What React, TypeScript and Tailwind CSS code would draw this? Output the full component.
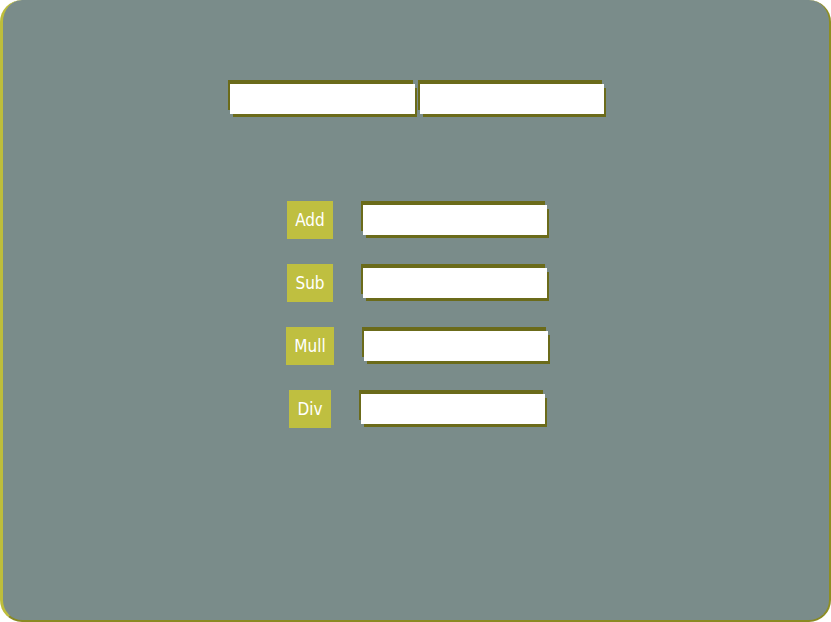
import React from 'react';

const ops = ['Add', 'Sub', 'Mull', 'Div'];

// white text box with the olive offset copies behind it (top-left and bottom-right)
const Field: React.FC<{ className?: string }> = ({ className = '' }) => (
    <div className={`relative h-[30px] ${className}`}>
        <div className="absolute left-[-2px] top-[-4px] right-[2px] bottom-[4px] bg-[#6b6b1a]" />
        <div className="absolute left-[3px] top-[4px] right-[-2px] bottom-[-3px] bg-[#6b6b1a]" />
        <input type="text" className="relative block w-full h-full p-0 border-0 bg-white outline-none" />
    </div>
);

export default function App() {
    return (
        <div className="w-[831px] h-[622px] bg-white" style={{ fontFamily: '"DejaVu Sans Condensed", "DejaVu Sans", Verdana, sans-serif' }}>
            <div className="h-full bg-[#7a8c8a] rounded-[22px] border-l-[3px] border-l-[#bdbd3b] border-r-2 border-r-[#8f8f22] border-b-2 border-b-[#8a8a22] pt-[84px]">
                <div className="flex justify-center gap-[5px] ml-[2px]">
                    <Field className="w-[185px]" />
                    <Field className="w-[184px]" />
                </div>

                <div className="flex flex-col gap-[25px] mt-[87px]">
                    {ops.map(op => (
                        <div key={op} className="flex items-center justify-center gap-[30px] h-[38px] ml-[2px]">
                            <button className="h-[38px] px-2 bg-[#bfbf40] text-white text-[17px] leading-none">
                                {op}
                            </button>
                            <Field className="w-[184px]" />
                        </div>
                    ))}
                </div>
            </div>
        </div>
    );
}
